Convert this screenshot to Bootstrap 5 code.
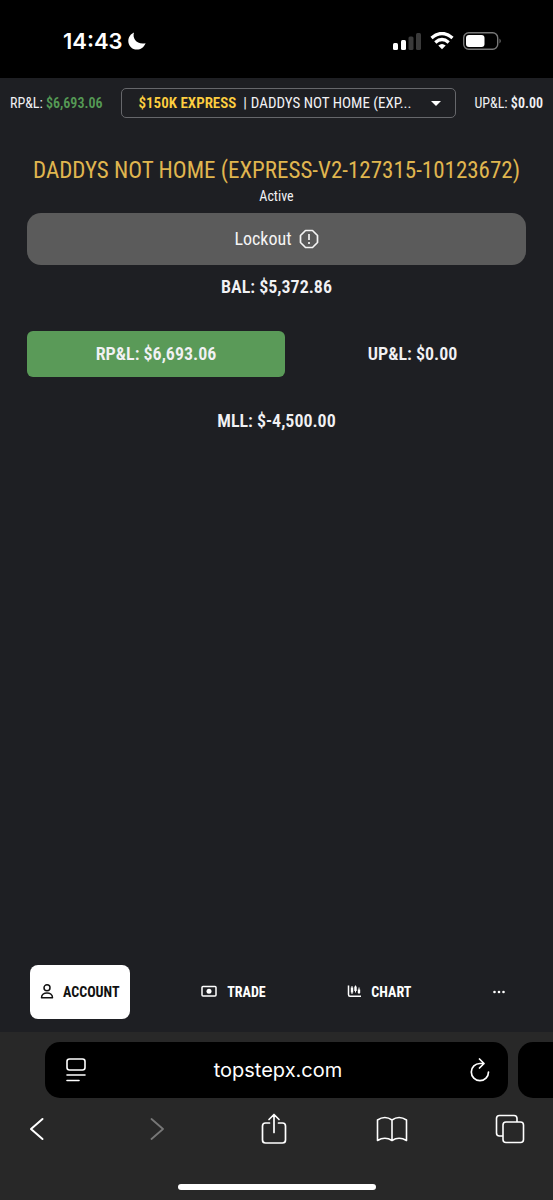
<!DOCTYPE html>
<html lang="en">
<head>
<meta charset="utf-8">
<meta name="viewport" content="width=device-width, initial-scale=1">
<title>TopstepX</title>
<link href="https://cdn.jsdelivr.net/npm/bootstrap@5.3.0/dist/css/bootstrap.min.css" rel="stylesheet">
<style>
:root { --cond: "Roboto Condensed", "Liberation Sans Narrow", Roboto, sans-serif; --ios: Inter, "Liberation Sans", sans-serif; }
body { background: #1e1f23; color: #f1f1f4; font-family: var(--cond); font-size: 14px; line-height: 20px; }
svg { display: block; flex: none; fill: none; stroke: currentColor; }
.status { background: #000; color: #fff; height: 78px; padding: 4px 51px 0 63px; font: 600 22px/28px var(--ios); }
.status-icons { gap: 9px; }
.topbar { padding: 10px 10px 0; gap: 18px; }
.topbar b { font-weight: 600; }
.picker { border: 1px solid #66676b; border-radius: 5px; height: 30px; padding: 0 14px 0 17px; gap: 4px; font-size: 15px; min-width: 0; }
.picker select { appearance: none; background: none; border: 0; padding: 0; color: inherit; font: inherit; min-width: 0; }
.gold { color: #ffcf40; }
.gain { color: #559a55; }
.content-pad { padding: 39px 27px 0; }
h1 { color: #e0b64f; font-size: 23px; line-height: 28px; font-weight: 400; margin: 0; }
.state { line-height: 16px; margin: 3px 0 9px; }
.lockout { background: #5b5b5b; color: #f4f4f4; border: 0; border-radius: 14px; height: 52px; font-size: 18px; gap: 7px; margin-bottom: 10px; }
.stat { font-size: 18px; line-height: 24px; font-weight: 600; }
.pair { gap: 14px; }
.cell { height: 46px; border-radius: 6px; }
.cell-gain { background: #5a9a58; }
.tabs-row { padding: 0 38px 13px 30px; }
.tab { border: 0; background: none; color: #fff; height: 54px; padding: 0 10px; border-radius: 8px; font-weight: 700; gap: 9px; }
.tab.active { background: #fff; color: #111; }
.browser { background: #282828; color: #fff; padding-top: 10px; }
.address { background: #000; border-radius: 15px; height: 56px; padding: 0 18px 0 21px; margin-left: 45px; }
.address input { background: none; border: 0; color: #fff; font: 400 20px/28px var(--ios); min-width: 0; outline: 0; }
.next-page { background: #000; border-radius: 15px 0 0 15px; width: 35px; }
.bar-row { gap: 10px; }
.plain { border: 0; background: none; color: inherit; padding: 0; }
.tools { padding: 0 25px 0 19px; height: 62px; }
.tools .plain { width: 36px; display: flex; justify-content: center; }
.dimmed { color: #777; }
.home-line { background: #fff; width: 198px; height: 6px; border-radius: 3px; margin: 24px auto 10px; }
</style>
</head>
<body class="d-flex flex-column min-vh-100">
<header class="status d-flex align-items-center">
  <time>14:43</time>
  <svg class="ms-1" width="20" height="20" viewBox="0 0 20 20" aria-hidden="true"><path d="M7 1.500C5 7.500 10 14 18.600 12.200 16.800 16.500 13.600 18.600 10 18.600 5 18.600 1.300 14.800 1.300 10 1.300 6.300 3.600 3 7 1.500Z" fill="#fff" stroke="none"/></svg>
  <div class="status-icons d-flex ms-auto">
    <svg width="28" height="18" viewBox="0 0 28 18" aria-label="Signal"><g stroke="none"><rect y="11" width="5" height="7" rx="1.5" fill="#fff"/><rect x="8" y="8" width="5" height="10" rx="1.5" fill="#fff"/><rect x="15.5" y="4.5" width="5" height="13.5" rx="1.5" fill="#3a3a3a"/><rect x="23" y="1" width="5" height="17" rx="1.5" fill="#3a3a3a"/></g></svg>
    <svg width="24" height="18" viewBox="0 0 24 18" aria-label="Wi-Fi"><path d="M1.500 6Q12-3 22.500 6M5.300 10.500Q12 4.600 18.700 10.500" stroke="#fff" stroke-width="3.300"/><path d="M8.300 13.500Q12 10.500 15.700 13.500L12 17.300Z" fill="#fff" stroke="none"/></svg>
    <svg width="39" height="18" viewBox="0 0 39 18" aria-label="Battery"><rect x=".7" y=".7" width="34" height="16.600" rx="5" stroke="#777" stroke-width="1.400"/><rect x="3" y="3" width="18.500" height="12" rx="3" fill="#fff" stroke="none"/><path d="M36.500 6.500Q39 9 36.500 11.500Z" fill="#777" stroke="none"/></svg>
  </div>
</header>

<div class="topbar d-flex align-items-center text-nowrap">
  <div>RP&amp;L: <b class="gain">$6,693.06</b></div>
  <div class="picker d-flex align-items-center flex-grow-1">
    <label for="account"><b class="gold">$150K EXPRESS</b> &nbsp;|</label>
    <select id="account" class="flex-grow-1"><option>DADDYS NOT HOME (EXP...</option></select>
    <svg width="10" height="5" viewBox="0 0 10 5" aria-hidden="true"><path d="M0 0H10L5 5Z" fill="#fff" stroke="none"/></svg>
  </div>
  <div>UP&amp;L: <b>$0.00</b></div>
</div>

<main class="content-pad flex-grow-1 text-center">
  <h1 class="text-nowrap">DADDYS NOT HOME (EXPRESS-V2-127315-10123672)</h1>
  <p class="state">Active</p>
  <button class="lockout w-100 d-flex align-items-center justify-content-center" type="button">Lockout
    <svg width="20" height="20" viewBox="0 0 20 20" stroke-width="1.700"><path d="M6.500 1.500H13.500L18.500 6.500V13.500L13.500 18.500H6.500L1.500 13.500V6.500Z" stroke-linejoin="round"/><path d="M10 5V11M10 13V15"/></svg>
  </button>
  <div class="stat">BAL: $5,372.86</div>
  <div class="pair d-flex stat mt-4 pt-2">
    <div class="cell cell-gain flex-fill d-flex align-items-center justify-content-center">RP&amp;L: $6,693.06</div>
    <div class="cell flex-fill d-flex align-items-center justify-content-center">UP&amp;L: $0.00</div>
  </div>
  <div class="stat mt-4 pt-2">MLL: $-4,500.00</div>
</main>

<nav class="tabs-row d-flex align-items-center justify-content-between">
  <button type="button" class="tab active d-flex align-items-center"><svg width="14" height="16" viewBox="0 0 14 16" stroke-width="1.500"><circle cx="7" cy="3.800" r="3"/><path d="M1.500 13.700C1.500 7.400 12.500 7.400 12.500 13.700Z" stroke-linejoin="round"/></svg>ACCOUNT</button>
  <button type="button" class="tab d-flex align-items-center"><svg width="17" height="14" viewBox="0 0 17 14"><rect x="1" y="1.500" width="14" height="9.500" rx="1" stroke-width="1.500"/><circle cx="8" cy="6.200" r="2.500" fill="currentColor" stroke="none"/></svg>TRADE</button>
  <button type="button" class="tab d-flex align-items-center"><svg width="15" height="14" viewBox="0 0 15 14"><path d="M1.500 .5V9.500Q1.500 11.300 3 11.300H14" stroke-width="1.500"/><path d="M5 1V9M8.500 .5V7.500M12 2.500V9"/><path d="M5 2.500V7.500M8.500 1.500V6M12 4.500V8" stroke-width="2.400"/></svg>CHART</button>
  <button type="button" class="tab" aria-label="More"><svg width="12" height="4" viewBox="0 0 12 4"><g fill="#fff" stroke="none"><circle cx="1.500" cy="2" r="1.300"/><circle cx="6" cy="2" r="1.300"/><circle cx="10.500" cy="2" r="1.300"/></g></svg></button>
</nav>

<footer class="browser">
  <div class="bar-row d-flex">
    <div class="address d-flex align-items-center flex-grow-1">
      <button class="plain" type="button" aria-label="Page menu"><svg width="20" height="24" viewBox="0 0 20 24" stroke-width="1.600" stroke-linecap="round"><rect x="1" y="1" width="18" height="11" rx="2.500"/><path d="M1 17H19M1 22.500H13"/></svg></button>
      <input class="flex-grow-1 text-center" type="text" value="topstepx.com" aria-label="Address">
      <button class="plain" type="button" aria-label="Reload"><svg width="20" height="24" viewBox="0 0 20 24" stroke-width="1.700" stroke-linecap="round" stroke-linejoin="round"><path d="M18.500 14A8.600 8.600 0 1 1 10 5.500H14M9.500 1L14 5.500 9.500 10"/></svg></button>
    </div>
    <div class="next-page"></div>
  </div>
  <div class="tools d-flex justify-content-between align-items-center">
    <button class="plain" type="button" aria-label="Back"><svg width="18" height="24" viewBox="0 0 18 24" stroke-width="2" stroke-linecap="round" stroke-linejoin="round"><path d="M14.500 2L3 12 14.500 22"/></svg></button>
    <button class="plain dimmed" type="button" aria-label="Forward"><svg width="18" height="24" viewBox="0 0 18 24" stroke-width="1.800" stroke-linecap="round" stroke-linejoin="round"><path d="M5.500 2L17 12 5.500 22"/></svg></button>
    <button class="plain" type="button" aria-label="Share"><svg width="26" height="32" viewBox="0 0 26 32" stroke-width="1.700" stroke-linecap="round" stroke-linejoin="round"><path d="M8.500 10H4.500Q1.500 10 1.500 13V27Q1.500 30 4.500 30H21.500Q24.500 30 24.500 27V13Q24.500 10 21.500 10H17.500M13 19.500V1.500M8 6.500L13 1.500 18 6.500"/></svg></button>
    <button class="plain" type="button" aria-label="Bookmarks"><svg width="32" height="26" viewBox="0 0 32 26" stroke-width="1.600" stroke-linejoin="round"><path d="M16 4Q9-1 1.500 4V24.500Q9 20 16 24.500 23 20 30.500 24.500V4Q23-1 16 4V24.500"/></svg></button>
    <button class="plain" type="button" aria-label="Tabs"><svg width="30" height="30" viewBox="0 0 30 30" stroke-width="1.600"><path d="M8 22H4.500Q1.500 22 1.500 19V4.500Q1.500 1.500 4.500 1.500H19Q22 1.500 22 4.500V8"/><rect x="8" y="8" width="20.500" height="20.500" rx="3"/></svg></button>
  </div>
  <div class="home-line"></div>
</footer>
<script src="https://cdn.jsdelivr.net/npm/bootstrap@5.3.0/dist/js/bootstrap.bundle.min.js"></script>
</body>
</html>
